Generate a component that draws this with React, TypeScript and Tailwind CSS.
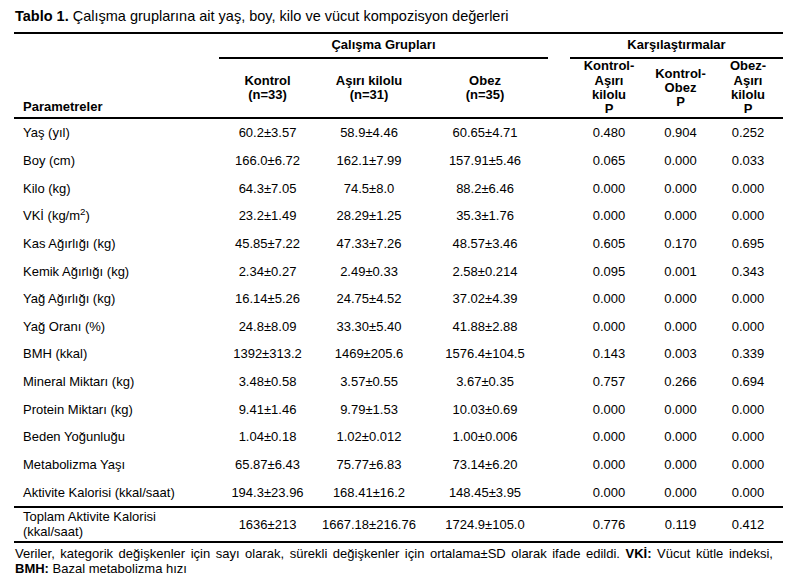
const cols = "grid grid-cols-[205px_97px_106px_126px_22px_78px_65px_70px]";

type Row = {
  label: React.ReactNode;
  kontrol: string;
  asiri: string;
  obez: string;
  p1: string;
  p2: string;
  p3: string;
};

const rows: Row[] = [
  { label: "Yaş (yıl)", kontrol: "60.2±3.57", asiri: "58.9±4.46", obez: "60.65±4.71", p1: "0.480", p2: "0.904", p3: "0.252" },
  { label: "Boy (cm)", kontrol: "166.0±6.72", asiri: "162.1±7.99", obez: "157.91±5.46", p1: "0.065", p2: "0.000", p3: "0.033" },
  { label: "Kilo (kg)", kontrol: "64.3±7.05", asiri: "74.5±8.0", obez: "88.2±6.46", p1: "0.000", p2: "0.000", p3: "0.000" },
  {
    label: (
      <>
        VKİ (kg/m<sup>2</sup>)
      </>
    ),
    kontrol: "23.2±1.49",
    asiri: "28.29±1.25",
    obez: "35.3±1.76",
    p1: "0.000",
    p2: "0.000",
    p3: "0.000",
  },
  { label: "Kas Ağırlığı (kg)", kontrol: "45.85±7.22", asiri: "47.33±7.26", obez: "48.57±3.46", p1: "0.605", p2: "0.170", p3: "0.695" },
  { label: "Kemik Ağırlığı (kg)", kontrol: "2.34±0.27", asiri: "2.49±0.33", obez: "2.58±0.214", p1: "0.095", p2: "0.001", p3: "0.343" },
  { label: "Yağ Ağırlığı (kg)", kontrol: "16.14±5.26", asiri: "24.75±4.52", obez: "37.02±4.39", p1: "0.000", p2: "0.000", p3: "0.000" },
  { label: "Yağ Oranı (%)", kontrol: "24.8±8.09", asiri: "33.30±5.40", obez: "41.88±2.88", p1: "0.000", p2: "0.000", p3: "0.000" },
  { label: "BMH (kkal)", kontrol: "1392±313.2", asiri: "1469±205.6", obez: "1576.4±104.5", p1: "0.143", p2: "0.003", p3: "0.339" },
  { label: "Mineral Miktarı (kg)", kontrol: "3.48±0.58", asiri: "3.57±0.55", obez: "3.67±0.35", p1: "0.757", p2: "0.266", p3: "0.694" },
  { label: "Protein Miktarı (kg)", kontrol: "9.41±1.46", asiri: "9.79±1.53", obez: "10.03±0.69", p1: "0.000", p2: "0.000", p3: "0.000" },
  { label: "Beden Yoğunluğu", kontrol: "1.04±0.18", asiri: "1.02±0.012", obez: "1.00±0.006", p1: "0.000", p2: "0.000", p3: "0.000" },
  { label: "Metabolizma Yaşı", kontrol: "65.87±6.43", asiri: "75.77±6.83", obez: "73.14±6.20", p1: "0.000", p2: "0.000", p3: "0.000" },
  { label: "Aktivite Kalorisi (kkal/saat)", kontrol: "194.3±23.96", asiri: "168.41±16.2", obez: "148.45±3.95", p1: "0.000", p2: "0.000", p3: "0.000" },
];

function DataRow({ row, className }: { row: Row; className: string }) {
  return (
    <div className={`${cols} items-center ${className}`}>
      <div className="pl-[9px]">{row.label}</div>
      <div className="text-center">{row.kontrol}</div>
      <div className="text-center">{row.asiri}</div>
      <div className="text-center">{row.obez}</div>
      <div />
      <div className="text-center">{row.p1}</div>
      <div className="text-center">{row.p2}</div>
      <div className="text-center">{row.p3}</div>
    </div>
  );
}

export default function App() {
  return (
    <div className="w-[793px] h-[584px] bg-white text-black font-['Liberation_Sans',Arial,sans-serif] text-[13px] leading-[15px] pl-[14px] pr-[10px]">
      {/* title */}
      <div className="h-[32px] pt-[7px] pl-px text-[14.5px] leading-[18px]">
        <span className="font-bold">Tablo 1.</span> Çalışma gruplarına ait yaş, boy, kilo ve vücut kompozisyon değerleri
      </div>

      {/* header */}
      <div className={`${cols} grid-rows-[25px_58px] border-y-2 border-black font-bold leading-[14.3px]`}>
        <div className="row-span-2 flex items-end pl-[9px] pb-[3px]">Parametreler</div>
        <div className="col-span-3 flex items-center justify-center border-b-2 border-black">Çalışma Grupları</div>
        <div />
        <div className="col-span-3 flex items-center justify-center border-b-2 border-black">Karşılaştırmalar</div>

        <div className="flex flex-col items-center justify-center text-center">
          <span>Kontrol</span>
          <span>(n=33)</span>
        </div>
        <div className="flex flex-col items-center justify-center text-center">
          <span>Aşırı kilolu</span>
          <span>(n=31)</span>
        </div>
        <div className="flex flex-col items-center justify-center text-center">
          <span>Obez</span>
          <span>(n=35)</span>
        </div>
        <div />
        <div className="flex flex-col items-center justify-center text-center">
          <span>Kontrol-</span>
          <span>Aşırı</span>
          <span>kilolu</span>
          <span>P</span>
        </div>
        <div className="flex flex-col items-center justify-center text-center">
          <span>Kontrol-</span>
          <span>Obez</span>
          <span>P</span>
        </div>
        <div className="flex flex-col items-center justify-center text-center">
          <span>Obez-</span>
          <span>Aşırı</span>
          <span>kilolu</span>
          <span>P</span>
        </div>
      </div>

      {/* body */}
      <div className="border-b-2 border-black">
        {rows.map((r, i) => (
          <DataRow key={i} row={r} className="h-[27.65px]" />
        ))}
      </div>

      {/* total row */}
      <DataRow
        row={{
          label: (
            <>
              Toplam Aktivite Kalorisi
              <br />
              (kkal/saat)
            </>
          ),
          kontrol: "1636±213",
          asiri: "1667.18±216.76",
          obez: "1724.9±105.0",
          p1: "0.776",
          p2: "0.119",
          p3: "0.412",
        }}
        className="h-[35px] border-b-2 border-black"
      />

      {/* footnote */}
      <p className="pt-[3px] pr-[10px] pl-px text-justify">
        Veriler, kategorik değişkenler için sayı olarak, sürekli değişkenler için ortalama±SD olarak ifade edildi.{" "}
        <b>VKİ:</b> Vücut kütle indeksi, <b>BMH:</b> Bazal metabolizma hızı
      </p>
    </div>
  );
}
